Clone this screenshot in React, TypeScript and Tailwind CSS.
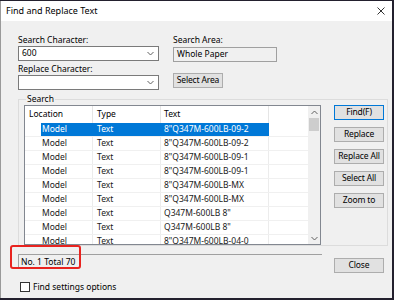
import React from 'react';

const rows = [
  '8"Q347M-600LB-09-2',
  '8"Q347M-600LB-09-2',
  '8"Q347M-600LB-09-1',
  '8"Q347M-600LB-09-1',
  '8"Q347M-600LB-MX',
  '8"Q347M-600LB-MX',
  'Q347M-600LB 8"',
  'Q347M-600LB 8"',
  '8"Q347M-600LB-04-0',
];

const Chevron = ({ up = false }: { up?: boolean }) => (
  <svg width="7" height="5" viewBox="0 0 7 5" className={up ? 'rotate-180' : ''}>
    <path d="M0.5 1 L3.5 4 L6.5 1" fill="none" stroke="#606060" strokeWidth="1" />
  </svg>
);

const Button = ({ label, primary = false }: { label: string; primary?: boolean }) => (
  <div
    className={`flex h-[15px] w-[50px] items-center justify-center bg-[#e1e1e1] text-[8.5px] leading-none tracking-[-0.15px] text-black ${
      primary ? 'border border-[#0078d7]' : 'border border-[#adadad]'
    }`}
  >
    {label}
  </div>
);

const Combo = ({ value }: { value: string }) => (
  <div className="flex h-[15px] w-[141px] items-center justify-between border border-[#7a7a7a] bg-white pl-[3px] pr-[4px] text-[8.5px] leading-none">
    <span>{value}</span>
    <Chevron />
  </div>
);

export default function App() {
  return (
    <div className="h-[300px] w-[394px] bg-[#23202e] pt-px" style={{ fontFamily: '"Noto Sans", "Open Sans", sans-serif' }}>
      <div className="relative flex h-[297px] w-[392px] flex-col border-l border-[#9a9a9a] bg-[#f0f0f0] text-black">
        {/* title bar */}
        <div className="flex h-[20px] shrink-0 items-center justify-between bg-white pl-[5px] pr-[7px]">
          <span className="text-[9px]">Find and Replace Text</span>
          <svg width="8" height="8" viewBox="0 0 8 8">
            <path d="M0.5 0.5 L7.5 7.5 M7.5 0.5 L0.5 7.5" stroke="#333" strokeWidth="1" />
          </svg>
        </div>

        {/* search fields */}
        <div className="flex gap-[14px] pl-[17px] pt-[13px]">
          <div className="flex flex-col">
            <span className="h-[12px] text-[8.5px] leading-[12px]">Search Character:</span>
            <Combo value="600" />
            <span className="mt-[2px] h-[12px] text-[8.5px] leading-[12px]">Replace Character:</span>
            <Combo value="" />
          </div>
          <div className="flex flex-col">
            <span className="h-[12px] text-[8.5px] leading-[12px]">Search Area:</span>
            <div className="mt-px flex h-[15px] w-[104px] items-center border border-[#a0a0a0] bg-[#f0f0f0] pl-[3px] text-[8.5px] leading-none">
              Whole Paper
            </div>
            <div className="mt-[11px]">
              <Button label="Select Area" />
            </div>
          </div>
        </div>

        {/* search group */}
        <fieldset className="mx-[17px] mt-[4px] h-[152px] shrink-0 border border-[#dcdcdc] pl-[5px] pr-[3px]">
          <legend className="ml-[2px] px-[1px] text-[8.5px] leading-[10px]">Search</legend>
          <div className="flex gap-[13px] pt-px">
            {/* list */}
            <div className="flex h-[140px] w-[297px] border border-[#828790] bg-white">
              <div className="flex flex-1 flex-col overflow-hidden">
                <div className="flex h-[17px] shrink-0 items-center text-[8.5px] leading-none">
                  <div className="flex h-full w-[68px] items-center border-r border-[#e5e5e5] pl-[4px]">Location</div>
                  <div className="flex h-full w-[68px] items-center border-r border-[#e5e5e5] pl-[4px]">Type</div>
                  <div className="flex h-full w-[108px] items-center border-r border-[#e5e5e5] pl-[3px]">Text</div>
                  <div className="flex-1" />
                </div>
                {rows.map((text, i) => {
                  const sel = i === 0;
                  return (
                    <div key={i} className="flex h-[14px] shrink-0 border-b border-[#f0f0f0] text-[8.5px] leading-none text-[#1a1a1a]">
                      <div className="w-[16px] shrink-0" />
                      <div className={`flex w-[52px] items-center border-r pl-px ${sel ? 'border-[#0078d7] bg-[#0078d7] text-white' : 'border-[#ececec]'}`}>
                        Model
                      </div>
                      <div className={`flex w-[68px] items-center border-r pl-[4px] ${sel ? 'border-[#0078d7] bg-[#0078d7] text-white' : 'border-[#ececec]'}`}>
                        Text
                      </div>
                      <div className={`flex w-[108px] items-center border-r pl-[3px] ${sel ? 'border-[#0078d7] bg-[#0078d7] text-white' : 'border-[#ececec]'}`}>
                        {text}
                      </div>
                      <div className="flex-1" />
                    </div>
                  );
                })}
              </div>
              {/* scrollbar */}
              <div className="flex w-[12px] flex-col items-center bg-[#f0f0f0]">
                <div className="flex h-[12px] items-center">
                  <Chevron up />
                </div>
                <div className="h-[13px] w-[10px] bg-[#cdcdcd]" />
                <div className="flex-1" />
                <div className="flex h-[12px] items-center">
                  <Chevron />
                </div>
              </div>
            </div>
            {/* buttons */}
            <div className="flex flex-col gap-[7px]">
              <Button label="Find(F)" primary />
              <Button label="Replace" />
              <Button label="Replace All" />
              <Button label="Select All" />
              <Button label="Zoom to" />
            </div>
          </div>
        </fieldset>

        {/* status */}
        <div className="mt-[8px] flex items-start gap-[12px] pl-[17px]">
          <div className="flex h-[15px] w-[304px] items-center border-t border-l border-[#a0a0a0] bg-[#f0f0f0] pl-[2px] text-[8.5px] leading-none">
            No. 1 Total 70
          </div>
          <div className="mt-[4px]">
            <Button label="Close" />
          </div>
        </div>

        {/* checkbox */}
        <div className="mt-[9px] flex items-center gap-[3px] pl-[19px]">
          <div className="h-[10px] w-[10px] border border-[#333] bg-white" />
          <span className="text-[8.5px] leading-none">Find settings options</span>
        </div>

        {/* annotation */}
        <div className="absolute left-[9px] top-[244px] h-[24px] w-[71px] rounded-[3px] border-2 border-[#e8231f]" />
      </div>
    </div>
  );
}
